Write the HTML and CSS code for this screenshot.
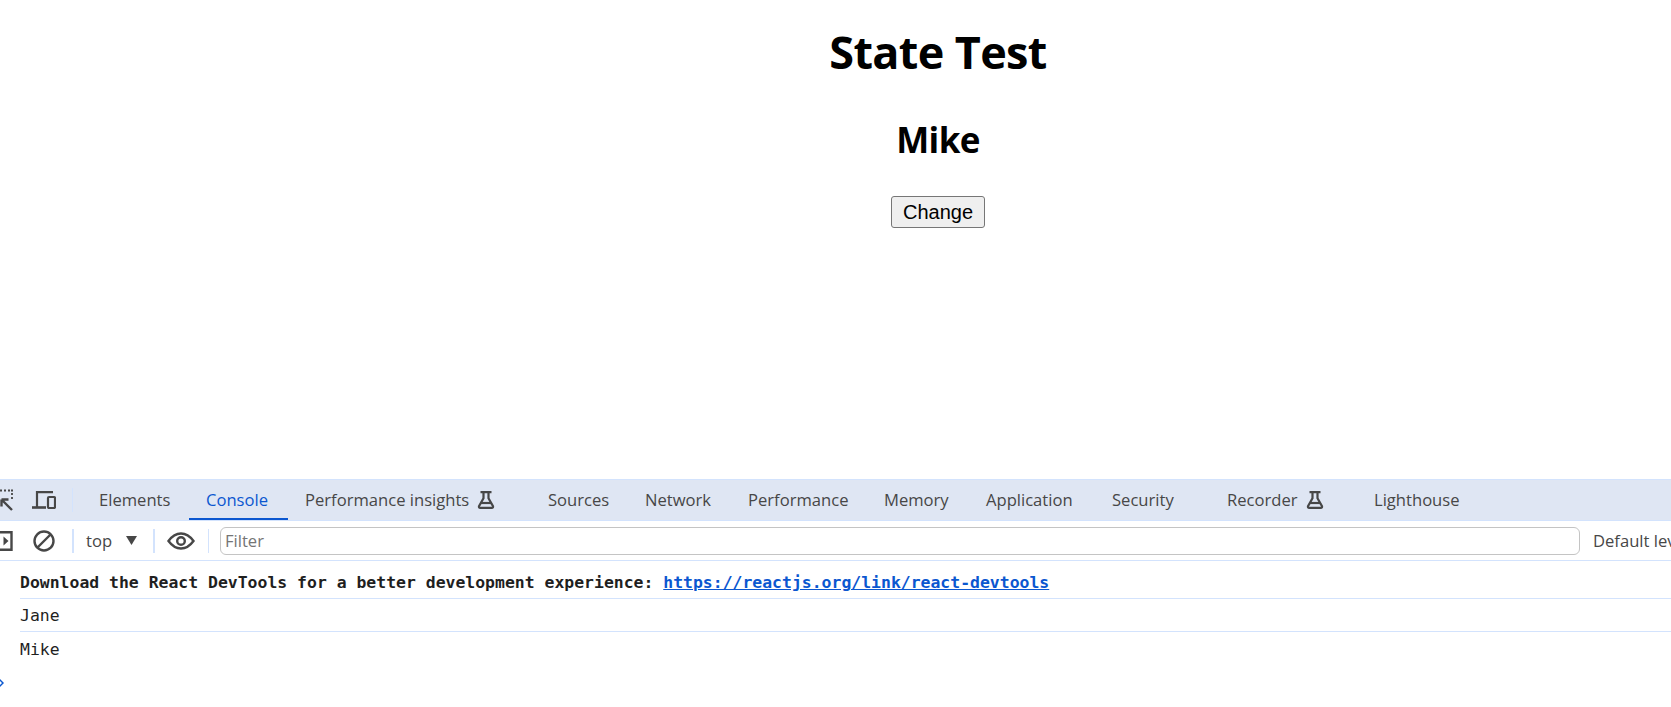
FILE: index.html
```html
<!DOCTYPE html>
<html lang="en">
<head>
<meta charset="utf-8">
<title>State Test</title>
<link rel="stylesheet" href="styles.css">
</head>
<body>
<main class="page">
  <h1 class="title">State Test</h1>
  <h2 class="name">Mike</h2>
  <button class="change" type="button">Change</button>
</main>
<section class="devtools">
  <div class="tabbar">
    <svg class="ico-inspect" width="13" height="22" viewBox="0 0 13 22" fill="none" stroke="#474747" stroke-width="2.400"><path d="M0 1.500h2M4 1.500h2M8 1.500h2M11 1.500h2M12 4v2M12 8v2" stroke-width="1.800"/><path d="M1.500 10.500h7M1.500 10.500v7M2 11l10 10"/></svg>
    <svg class="ico-device" width="24" height="18" viewBox="0 0 24 18" fill="none" stroke="#474747" stroke-width="2.200"><path d="M21 1.100H5v15"/><path d="M0 16.500h14" stroke-width="2.600"/><rect x="16" y="6" width="7" height="11" rx="1"/></svg>
    <span class="sep tab-sep"></span>
    <div class="tabs">
      <span class="tab">Elements</span>
      <span class="tab tab-active">Console</span>
      <span class="tab">Performance insights
        <svg class="flask" width="18" height="18" viewBox="0 0 18 18" fill="none" stroke="#474747" stroke-width="2.200"><path d="M3.500 1.200h11M6.500 1.200v6L2 15.200q-.5 1.600 1.200 1.600h11.600q1.700 0 1.200-1.600l-4.500-8v-6"/><path d="M4 12h10"/></svg>
      </span>
      <span class="tab">Sources</span>
      <span class="tab">Network</span>
      <span class="tab">Performance</span>
      <span class="tab">Memory</span>
      <span class="tab">Application</span>
      <span class="tab">Security</span>
      <span class="tab">Recorder
        <svg class="flask" width="18" height="18" viewBox="0 0 18 18" fill="none" stroke="#474747" stroke-width="2.200"><path d="M3.500 1.200h11M6.500 1.200v6L2 15.200q-.5 1.600 1.200 1.600h11.600q1.700 0 1.200-1.600l-4.500-8v-6"/><path d="M4 12h10"/></svg>
      </span>
      <span class="tab">Lighthouse</span>
    </div>
  </div>
  <div class="toolbar">
    <svg class="ico-panel" width="13" height="20" viewBox="0 0 13 20" fill="none"><path d="M0 1.200h11.500v17.600H0" stroke="#474747" stroke-width="2.400"/><path d="M3.500 5.500 8.500 10l-5 4.500z" fill="#474747"/></svg>
    <svg class="ico-clear" width="22" height="22" viewBox="0 0 22 22" fill="none" stroke="#474747" stroke-width="2.400"><circle cx="11" cy="11" r="9.500"/><path d="M4.500 17.500l13-13"/></svg>
    <span class="sep sep-a"></span>
    <span class="context">top</span>
    <svg class="ico-arrow" width="11" height="9" viewBox="0 0 11 9"><path d="M0 0h11L5.500 9z" fill="#474747"/></svg>
    <span class="sep sep-b"></span>
    <svg class="ico-eye" width="28" height="18" viewBox="0 0 28 18" fill="none" stroke="#474747" stroke-width="2.400"><path d="M1.500 9q5.500-7.500 12.500-7.500T26.500 9q-5.500 7.500-12.500 7.500T1.500 9z"/><circle cx="14" cy="9" r="3.800"/></svg>
    <span class="sep sep-c"></span>
    <input class="filter" type="text" placeholder="Filter" aria-label="Filter">
    <span class="levels">Default levels</span>
  </div>
  <div class="console">
    <div class="row row-first"><b>Download the React DevTools for a better development experience: <a class="link" href="#">https://reactjs.org/link/react-devtools</a></b></div>
    <div class="row">Jane</div>
    <div class="row row-last">Mike</div>
    <svg class="prompt" width="5" height="10" viewBox="0 0 5 10" fill="none"><path d="M0 1l4 4-4 4" stroke="#0b57d0" stroke-width="1.500"/></svg>
  </div>
</section>
</body>
</html>
```
FILE: styles.css
```css
html, body { margin: 0; padding: 0; height: 100%; }
body {
  width: 1671px;
  height: 707px;
  overflow: hidden;
  background: #fff;
  display: flex;
  flex-direction: column;
  font-family: "Open Sans", "Noto Sans", sans-serif;
}
.page {
  height: 479px;
  flex: none;
  box-sizing: border-box;
  padding-left: 205px;
  padding-top: 22px;
  text-align: center;
  color: #000;
}
.title { margin: 0; font-size: 45px; line-height: 60px; font-weight: 700; letter-spacing: -0.65px; }
.name { margin: 33px 0 0; font-size: 35px; line-height: 50px; font-weight: 700; letter-spacing: -0.6px; }
.change {
  display: block;
  margin: 31px auto 0;
  width: 94px;
  height: 32px;
  padding: 0;
  font-family: "Liberation Sans", Arial, sans-serif;
  font-size: 20px;
  color: #000;
  background: #efefef;
  border: 1px solid #767676;
  border-radius: 3px;
}
.devtools { flex: 1; min-height: 0; color: #474747; font-size: 16.6px; }
.tabbar {
  height: 40px;
  background: #dfe6f3;
  border-top: 1px solid #d3e3fd;
  border-bottom: 1px solid #d3e3fd;
  display: flex;
  align-items: center;
}
.ico-inspect { flex: none; }
.ico-device { flex: none; margin-left: 19px; }
.sep { flex: none; width: 1px; height: 24px; background: #d3e3fd; }
.tab-sep { margin-left: 16px; }
.tabs {
  flex: none;
  height: 100%;
  margin-left: 9px;
  display: grid;
  grid-template-columns: 107px 99px 243px 97px 103px 136px 102px 126px 115px 147px 120px;
}
.tab {
  display: flex;
  align-items: center;
  padding-left: 17px;
  padding-bottom: 1px;
  white-space: nowrap;
  box-sizing: border-box;
}
.flask { margin-left: 8px; flex: none; }
.tab-active { color: #0b57d0; border-bottom: 2px solid #0b57d0; padding-top: 1px; padding-bottom: 0; }
.toolbar {
  height: 39px;
  border-bottom: 1px solid #d3e3fd;
  display: flex;
  align-items: center;
  white-space: nowrap;
}
.ico-panel { flex: none; }
.ico-clear { flex: none; margin-left: 20px; }
.sep-a { margin-left: 17px; width: 2px; }
.context { margin-left: 12px; width: 40px; flex: none; }
.ico-arrow { flex: none; }
.sep-b { margin-left: 16px; width: 2px; }
.ico-eye { flex: none; margin-left: 12px; }
.sep-c { margin-left: 13px; }
.filter {
  flex: none;
  margin-left: 11px;
  width: 1360px;
  height: 28px;
  box-sizing: border-box;
  padding: 0 4px;
  border: 1px solid #c4c4c4;
  border-radius: 6px;
  font: inherit;
  outline: none;
}
.filter::placeholder { color: #757575; opacity: 1; }
.levels { margin-left: 13px; }
.console {
  font-family: "DejaVu Sans Mono", "Liberation Mono", monospace;
  font-size: 16.45px;
  color: #1f1f1f;
}
.row {
  margin-left: 20px;
  height: 33px;
  line-height: 33px;
  border-bottom: 1px solid #d3e3fd;
  box-sizing: border-box;
  white-space: nowrap;
}
.row-first { height: 38px; line-height: 43px; }
.row-last { border-bottom: 0; line-height: 35px; }
.link { color: #0b57d0; text-decoration: underline; }
.prompt { display: block; margin: 13px 0 0 -1px; }
```
